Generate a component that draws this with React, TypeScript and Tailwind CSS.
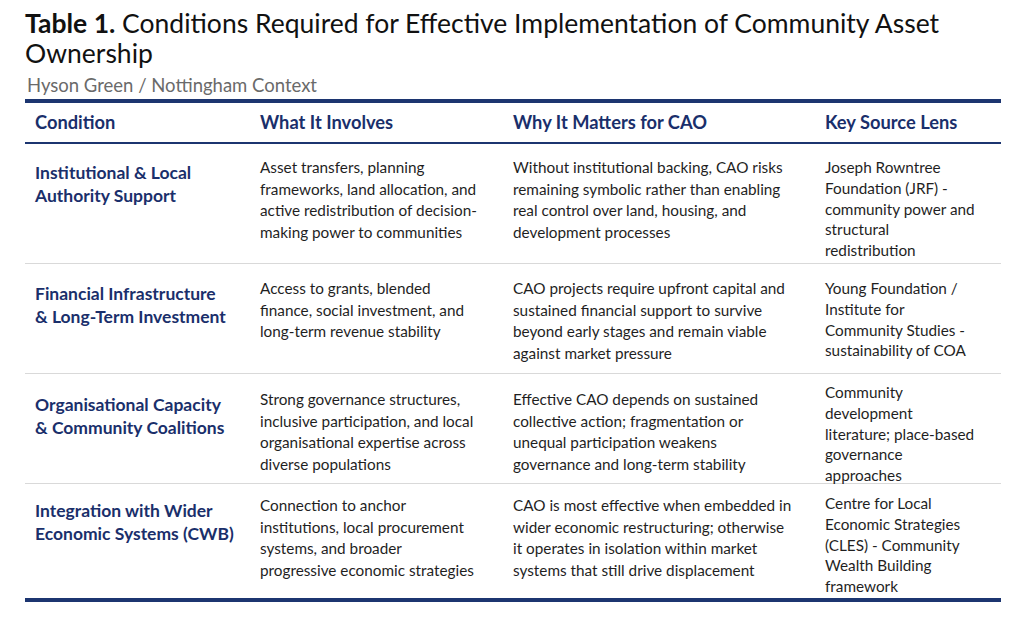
import React from 'react'

type Row = {
  condition: string[]
  involves: string[]
  matters: string[]
  source: string[]
  pad: string
  h: string
  src: string
}

const rows: Row[] = [
  {
    condition: ['Institutional & Local', 'Authority Support'],
    involves: ['Asset transfers, planning', 'frameworks, land allocation, and', 'active redistribution of decision-', 'making power to communities'],
    matters: ['Without institutional backing, CAO risks', 'remaining symbolic rather than enabling', 'real control over land, housing, and', 'development processes'],
    source: ['Joseph Rowntree', 'Foundation (JRF) -', 'community power and', 'structural', 'redistribution'],
    pad: 'pt-[13px]',
    h: 'h-[120px]',
    src: '',
  },
  {
    condition: ['Financial Infrastructure', '& Long-Term Investment'],
    involves: ['Access to grants, blended', 'finance, social investment, and', 'long-term revenue stability'],
    matters: ['CAO projects require upfront capital and', 'sustained financial support to survive', 'beyond early stages and remain viable', 'against market pressure'],
    source: ['Young Foundation /', 'Institute for', 'Community Studies -', 'sustainability of COA'],
    pad: 'pt-[14px]',
    h: 'h-[110px]',
    src: '',
  },
  {
    condition: ['Organisational Capacity', '& Community Coalitions'],
    involves: ['Strong governance structures,', 'inclusive participation, and local', 'organisational expertise across', 'diverse populations'],
    matters: ['Effective CAO depends on sustained', 'collective action; fragmentation or', 'unequal participation weakens', 'governance and long-term stability'],
    source: ['Community', 'development', 'literature; place-based', 'governance', 'approaches'],
    pad: 'pt-[15px]',
    h: 'h-[110px]',
    src: '-mt-[7px]',
  },
  {
    condition: ['Integration with Wider', 'Economic Systems (CWB)'],
    involves: ['Connection to anchor', 'institutions, local procurement', 'systems, and broader', 'progressive economic strategies'],
    matters: ['CAO is most effective when embedded in', 'wider economic restructuring; otherwise', 'it operates in isolation within market', 'systems that still drive displacement'],
    source: ['Centre for Local', 'Economic Strategies', '(CLES) - Community', 'Wealth Building', 'framework'],
    pad: 'pt-[11px]',
    h: 'h-[114px]',
    src: '-mt-[2px]',
  },
]

const Lines = ({ lines, className }: { lines: string[]; className: string }) => (
  <div className={className}>
    {lines.map((l) => (
      <div key={l} className="whitespace-nowrap">
        {l}
      </div>
    ))}
  </div>
)

export default function App() {
  return (
    <div className="w-[1024px] h-[620px] bg-white pl-[25px] pt-[8px] font-['Lato',sans-serif] text-[#1f1f1f]">
      <h1 className="text-[26.5px] leading-[30px] text-[#111]">
        <span className="font-bold">Table 1.</span> Conditions Required for Effective Implementation of Community Asset Ownership
      </h1>
      <p className="mt-[4px] pl-[2px] text-[18.5px] leading-[26px] text-[#6a6a6a]">Hyson Green / Nottingham Context</p>

      <div className="w-[976px] mt-[1px] border-t-4 border-b-[4px] border-[#1c3570]">
        <div className="grid grid-cols-[225px_253px_312px_186px] h-[41px] items-center border-b-2 border-[#1c3570] text-[18.3px] font-bold text-[#1a2f6b]">
          <div className="pl-[10px]">Condition</div>
          <div className="pl-[10px]">What It Involves</div>
          <div className="pl-[10px]">Why It Matters for CAO</div>
          <div className="pl-[10px]">Key Source Lens</div>
        </div>
        {rows.map((r, i) => (
          <div
            key={i}
            className={`grid grid-cols-[225px_253px_312px_186px] items-start ${r.h} ${r.pad} ${i < rows.length - 1 ? 'border-b border-[#d9d9d9]' : ''}`}
          >
            <Lines lines={r.condition} className="pl-[10px] pt-[4px] text-[17.5px] leading-[23px] font-bold text-[#1a2f6b]" />
            <Lines lines={r.involves} className="pl-[10px] text-[15.3px] leading-[21.5px]" />
            <Lines lines={r.matters} className="pl-[10px] text-[15.3px] leading-[21.5px]" />
            <Lines lines={r.source} className={`pl-[10px] text-[15.3px] leading-[20.8px] ${r.src}`} />
          </div>
        ))}
      </div>
    </div>
  )
}
